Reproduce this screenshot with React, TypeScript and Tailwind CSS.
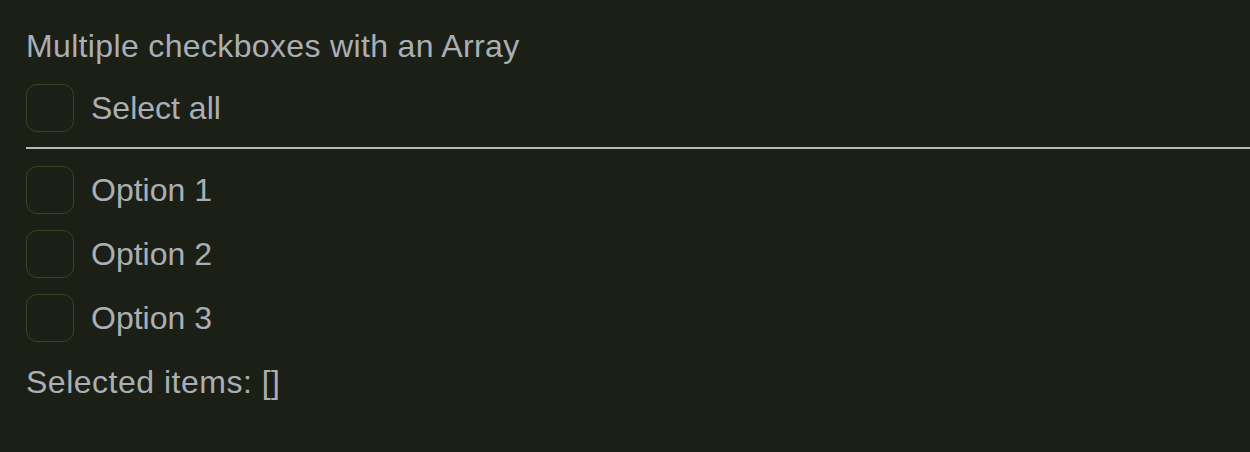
import React from "react";

const Box = () => (
  <span className="block w-[48px] h-[48px] rounded-[11px] border border-[#35451f] shrink-0" />
);

const Row = ({ label }: { label: string }) => (
  <label className="flex items-center gap-[17px] h-[48px]">
    <Box />
    <span>{label}</span>
  </label>
);

export default function App() {
  return (
    <div
      className="w-[1250px] h-[452px] bg-[#1c1f15] text-[#a9afb5] text-[32px] leading-none pl-[26px] pt-[31px]"
      style={{ fontFamily: '"Liberation Sans", Arial, sans-serif' }}
    >
      <div className="h-[30px] flex items-center tracking-[0.35px]">Multiple checkboxes with an Array</div>
      <div className="mt-[23px] flex items-center gap-[17px] h-[48px]">
        <Box />
        <span>Select all</span>
      </div>
      <div className="mt-[15px] h-[2px] bg-[#b5b9bd]" />
      <div className="mt-[17px] flex flex-col gap-[16px]">
        <Row label="Option 1" />
        <Row label="Option 2" />
        <Row label="Option 3" />
      </div>
      <div className="mt-[25px] h-[30px] flex items-center tracking-[0.5px]">Selected items: []</div>
    </div>
  );
}
